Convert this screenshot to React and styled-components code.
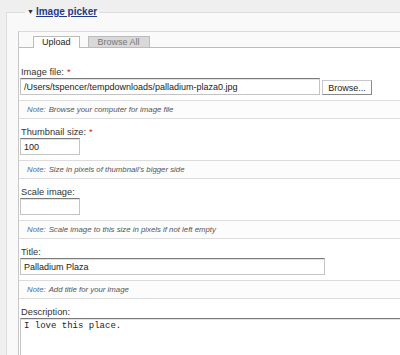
import React from "react";
import styled, { createGlobalStyle } from "styled-components";

const GlobalStyle = createGlobalStyle`
  html, body {
    margin: 0;
    padding: 0;
    overflow: hidden;
    background: #efefef;
  }
  body {
    font-family: "Liberation Sans", Arial, sans-serif;
    color: #333;
  }
`;

const Page = styled.div`
  box-sizing: border-box;
  padding-top: 6px;
  width: 400px;
  height: 355px;
  overflow: hidden;
`;

const Fieldset = styled.fieldset`
  box-sizing: border-box;
  margin: 0 0 0 6px;
  padding: 13px 0 0 11px;
  border: solid #dcdcdc;
  border-width: 1px 0 0 1px;
  background: #f9f9f9;
  min-width: 0;
  height: 100%;
`;

const Legend = styled.legend`
  margin-left: 7px;
  padding: 0 2px;
  line-height: 12px;
  font-size: 10px;
  font-weight: bold;
  display: flex;
  align-items: center;
  gap: 2px;
`;

const Arrow = styled.span`
  font-size: 7px;
  color: #333;
`;

const LegendLink = styled.a`
  color: #1f3a8a;
  text-decoration: underline;
`;

const Panel = styled.div`
  background: #fff;
  border-top: 1px solid #dadada;
  border-left: 1px solid #c8c8c8;
  height: 100%;
  overflow: hidden;
`;

const TabBar = styled.div`
  display: flex;
  align-items: flex-end;
  gap: 8px;
  height: 15px;
  padding-left: 14px;
  background: #fafafa;
  border-bottom: 1px solid #bbb;
`;

const Tab = styled.div`
  height: ${p => (p.$active ? "11px" : "10px")};
  margin-bottom: ${p => (p.$active ? "-1px" : "0")};
  padding: 0 ${p => (p.$active ? "8px" : "9px")};
  background: ${p => (p.$active ? "#fff" : "#d9d9d9")};
  border: 1px solid #bbb;
  border-bottom: none;
  font-size: 9px;
  line-height: 10px;
  color: ${p => (p.$active ? "#222" : "#777")};
`;

const Content = styled.div`
  padding-top: 11px;
`;

const Field = styled.div`
  padding: 7px 0 0 1px;
`;

const Label = styled.div`
  height: 12px;
  line-height: 12px;
  padding-left: 1px;
  font-size: 9.3px;
  color: #333;
`;

const Required = styled.span`
  color: #d22;
  margin-left: 3px;
`;

const Row = styled.div`
  display: flex;
  align-items: flex-start;
  gap: 2px;
`;

const Input = styled.input`
  box-sizing: border-box;
  width: ${p => p.$w}px;
  height: 17px;
  margin: 0;
  padding: 0 3px;
  border: 1px solid #c4c4c4;
  border-top-color: #7a7a7a;
  box-shadow: inset 0 1px 0 #e2e2e2;
  font-family: "Liberation Sans", Arial, sans-serif;
  font-size: 9px;
  color: #222;
  background: #fff;
  outline: none;
`;

const Button = styled.button`
  box-sizing: border-box;
  width: 50px;
  height: 15px;
  margin-top: 2px;
  padding: 0;
  border: 1px solid #c8c8c8;
  border-right-color: #8a8a8a;
  border-bottom-color: #8a8a8a;
  background: #fff;
  font-family: "Liberation Sans", Arial, sans-serif;
  font-size: 9px;
  color: #222;
`;

const Note = styled.div`
  box-sizing: border-box;
  margin: 5px 0 0 -1px;
  height: 19px;
  padding-left: 8px;
  border-top: 1px solid #dcdcdc;
  border-bottom: 1px solid #dcdcdc;
  background: #fcfcfc;
  font-size: 7.8px;
  font-style: italic;
  line-height: 17px;
  color: #555;
`;

const NoteTag = styled.span`
  color: #4f6f9f;
  margin-right: 3px;
`;

const TextArea = styled.textarea`
  box-sizing: border-box;
  display: block;
  width: 420px;
  height: 60px;
  margin: 0;
  padding: 2px 3px;
  border: 1px solid #c4c4c4;
  border-top-color: #7a7a7a;
  box-shadow: inset 0 1px 0 #e2e2e2;
  font-family: "Liberation Mono", "Courier New", monospace;
  font-size: 9px;
  line-height: 11px;
  color: #222;
  resize: none;
  outline: none;
`;

const fields = [
  { label: "Image file:", required: true, value: "/Users/tspencer/tempdownloads/palladium-plaza0.jpg", width: 300, browse: true, note: "Browse your computer for image file" },
  { label: "Thumbnail size:", required: true, value: "100", width: 60, note: "Size in pixels of thumbnail's bigger side" },
  { label: "Scale image:", value: "", width: 60, note: "Scale image to this size in pixels if not left empty" },
  { label: "Title:", value: "Palladium Plaza", width: 305, note: "Add title for your image" },
];

export default function App() {
  return (
    <Page>
      <GlobalStyle />
      <Fieldset>
        <Legend>
          <Arrow>▼</Arrow>
          <LegendLink href="#">Image picker</LegendLink>
        </Legend>
        <Panel>
          <TabBar>
            <Tab $active>Upload</Tab>
            <Tab>Browse All</Tab>
          </TabBar>
          <Content>
            {fields.map(f => (
              <Field key={f.label}>
                <Label>
                  {f.label}
                  {f.required && <Required>*</Required>}
                </Label>
                <Row>
                  <Input $w={f.width} defaultValue={f.value} />
                  {f.browse && <Button>Browse...</Button>}
                </Row>
                <Note>
                  <NoteTag>Note:</NoteTag>
                  {f.note}
                </Note>
              </Field>
            ))}
            <Field>
              <Label>Description:</Label>
              <TextArea defaultValue="I love this place." />
            </Field>
          </Content>
        </Panel>
      </Fieldset>
    </Page>
  );
}
